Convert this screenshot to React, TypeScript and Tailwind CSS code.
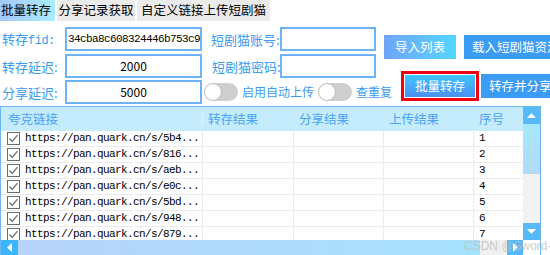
import React from "react";

const rows = [
  { url: "https://pan.quark.cn/s/5b4...", no: "1" },
  { url: "https://pan.quark.cn/s/816...", no: "2" },
  { url: "https://pan.quark.cn/s/aeb...", no: "3" },
  { url: "https://pan.quark.cn/s/e0c...", no: "4" },
  { url: "https://pan.quark.cn/s/5bd...", no: "5" },
  { url: "https://pan.quark.cn/s/948...", no: "6" },
  { url: "https://pan.quark.cn/s/879...", no: "7" },
];

const cjk = "[font-family:'Noto_Sans_CJK_SC',sans-serif]";
const mono = "[font-family:'Liberation_Mono',monospace] text-[11px] tracking-[-0.6px]";

function Toggle() {
  return (
    <div className="w-[34px] h-[18px] rounded-full bg-[#cfcfcf] flex items-center px-[1px] shrink-0">
      <div className="w-[16px] h-[16px] rounded-full bg-white shadow-[0_0_2px_rgba(0,0,0,0.25)]" />
    </div>
  );
}

function Check() {
  return (
    <div className="w-[13px] h-[13px] border border-[#6b6b6b] bg-white flex items-center justify-center shrink-0">
      <svg width="11" height="11" viewBox="0 0 11 11">
        <path d="M1.5 5.5 L4.3 8.3 L9.5 2.2" fill="none" stroke="#6b6b6b" strokeWidth="1.3" />
      </svg>
    </div>
  );
}

function Label({ children, w }: { children: React.ReactNode; w: string }) {
  return <div className={`${w} text-[13px] text-[#3a9bf0] leading-none shrink-0 whitespace-nowrap`}>{children}</div>;
}

export default function App() {
  const inputCls = "h-[24px] border-2 border-[#6cb4f5] bg-white flex items-center shrink-0";
  return (
    <div className={`w-[550px] h-[255px] bg-white overflow-hidden relative ${cjk}`}>
      {/* tabs */}
      <div className="flex h-[21px] items-stretch gap-[2px] text-[12.5px] text-black leading-none">
        <div className="w-[55px] bg-gradient-to-r from-[#a5c9f8] to-[#a8edff] flex items-center pl-[1px]">批量转存</div>
        <div className="w-[78px] bg-[#ebebeb] flex items-center justify-center">分享记录获取</div>
        <div className="w-[133px] bg-[#ebebeb] flex items-center justify-center">自定义链接上传短剧猫</div>
      </div>

      {/* form */}
      <div className="flex h-[85px]">
        <div className="w-[384px] flex flex-col pt-[6px]">
          <div className="flex items-center h-[24px]">
            <Label w="w-[65px] pl-[2px]">
              转存<span className="[font-family:'Liberation_Mono',monospace] text-[12px] tracking-[-0.5px]">fid:</span>
            </Label>
            <div className={`${inputCls} w-[137px] pl-[1px] overflow-hidden`}>
              <span className={`${mono} text-black whitespace-nowrap`}>34cba8c608324446b753c9</span>
            </div>
            <Label w="w-[78px] pl-[9px]">短剧猫账号:</Label>
            <div className={`${inputCls} w-[96px]`} />
          </div>
          <div className="flex items-center h-[24px] mt-[3px]">
            <Label w="w-[65px] pl-[2px]">转存延迟:</Label>
            <div className={`${inputCls} w-[137px] justify-center text-[12px] text-black`}>2000</div>
            <Label w="w-[78px] pl-[10px]">短剧猫密码:</Label>
            <div className={`${inputCls} w-[96px]`} />
          </div>
          <div className="flex items-center h-[24px] mt-[2px]">
            <Label w="w-[65px] pl-[2px]">分享延迟:</Label>
            <div className={`${inputCls} w-[137px] justify-center text-[12px] text-black`}>5000</div>
            <div className="ml-[2px]"><Toggle /></div>
            <span className="ml-[4px] text-[12px] text-[#3a9bf0] leading-none whitespace-nowrap">启用自动上传</span>
            <div className="ml-[4px]"><Toggle /></div>
            <span className="ml-[4px] text-[12px] text-[#3a9bf0] leading-none whitespace-nowrap">查重复</span>
          </div>
        </div>
        <div className="flex-1 flex flex-col pt-[14px] text-[12.5px] text-white leading-none">
          <div className="flex gap-[8px] h-[24px]">
            <div className="w-[72px] shrink-0 bg-gradient-to-r from-[#6ea4f8] to-[#52d6ff] flex items-center justify-center">导入列表</div>
            <div className="w-[100px] shrink-0 bg-[#3a9cf4] flex items-center pl-[8px] whitespace-nowrap">载入短剧猫资源</div>
          </div>
          <div className="flex items-center mt-[12px] ml-[17px] gap-[2px]">
            <div className="w-[78px] h-[30px] shrink-0 border-[3px] border-[#f00010] flex">
              <div className="flex-1 bg-gradient-to-b from-[#3cc8ff] to-[#4a8ff0] flex items-center justify-center m-[1px]">批量转存</div>
            </div>
            <div className="w-[80px] h-[24px] shrink-0 bg-[#3a9cf4] flex items-center pl-[8px] whitespace-nowrap">转存并分享</div>
          </div>
        </div>
      </div>

      {/* table */}
      <div className="w-[541px] h-[150px] border border-[#6cb6f7] flex flex-col">
        <div className="flex h-[133px]">
          <div className="w-[522px] flex flex-col overflow-hidden">
            <div className="flex h-[24px] shrink-0 bg-[#c4ecfc] text-[12.5px] text-[#4ba3f5] leading-none items-center">
              <div className="w-[202px] pl-[7px] border-r border-[#dff5fe]">夸克链接</div>
              <div className="w-[91px] pl-[5px]">转存结果</div>
              <div className="w-[90px] pl-[5px]">分享结果</div>
              <div className="w-[90px] pl-[5px]">上传结果</div>
              <div className="w-[49px] pl-[5px]">序号</div>
            </div>
            {rows.map((r) => (
              <div key={r.no} className="flex h-[16px] shrink-0 border-b border-[#ececec] text-black">
                <div className="w-[202px] flex items-center gap-[5px] pl-[6px] border-r border-[#ececec] overflow-hidden">
                  <Check />
                  <span className={`${mono} leading-none whitespace-nowrap`}>{r.url}</span>
                </div>
                <div className="w-[91px] border-r border-[#ececec]" />
                <div className="w-[90px] border-r border-[#ececec]" />
                <div className="w-[90px] border-r border-[#ececec]" />
                <div className={`w-[49px] pl-[5px] flex items-center ${mono} leading-none`}>{r.no}</div>
              </div>
            ))}
          </div>
          <div className="w-[17px] flex flex-col">
            <div className="h-[17px] bg-[#56b9f8] flex items-center justify-center">
              <svg width="9" height="5" viewBox="0 0 9 5"><path d="M0 5 L4.5 0 L9 5 Z" fill="white" /></svg>
            </div>
            <div className="h-[50px] bg-gradient-to-b from-[#a6e7fd] to-[#b2dafb]" />
            <div className="flex-1 bg-[#f2f2f2]" />
            <div className="h-[17px] bg-[#56b9f8] flex items-center justify-center">
              <svg width="9" height="5" viewBox="0 0 9 5"><path d="M0 0 L4.5 5 L9 0 Z" fill="white" /></svg>
            </div>
          </div>
        </div>
        <div className="flex flex-1">
          <div className="w-[17px] bg-[#3db5fb] flex items-center justify-center">
            <svg width="5" height="9" viewBox="0 0 5 9"><path d="M5 0 L0 4.5 L5 9 Z" fill="white" /></svg>
          </div>
          <div className="w-[462px] bg-gradient-to-r from-[#b6d3fa] to-[#a6e2fc]" />
          <div className="w-[27px] bg-[#f0f0f0]" />
          <div className="w-[16px] bg-[#56b9f8] flex items-center justify-center">
            <svg width="5" height="9" viewBox="0 0 5 9"><path d="M0 0 L5 4.5 L0 9 Z" fill="white" /></svg>
          </div>
          <div className="flex-1 bg-white" />
        </div>
      </div>

      {/* watermark */}
      <div className="absolute left-[464px] top-[240px] text-[12px] text-[#bdbdbd]/80 [font-family:'Liberation_Sans','Noto_Sans_CJK_SC',sans-serif] whitespace-nowrap leading-none">
        CSDN @Sword-婆
      </div>
    </div>
  );
}
